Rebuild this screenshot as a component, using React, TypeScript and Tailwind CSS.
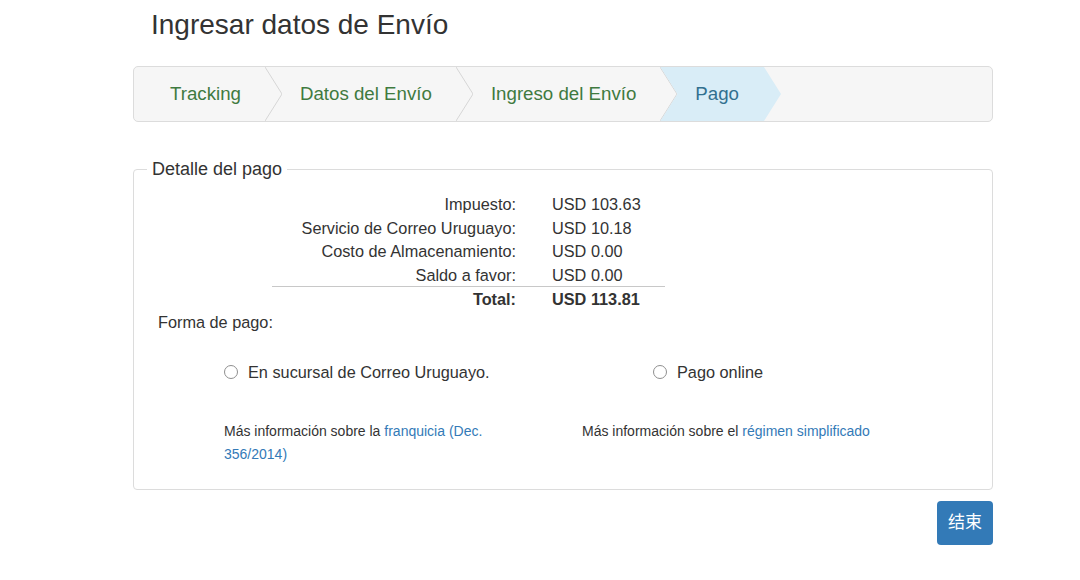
import React from 'react';

const steps = ['Tracking', 'Datos del Envío', 'Ingreso del Envío'];

const rows = [
  { label: 'Impuesto:', value: 'USD 103.63' },
  { label: 'Servicio de Correo Uruguayo:', value: 'USD 10.18' },
  { label: 'Costo de Almacenamiento:', value: 'USD 0.00' },
  { label: 'Saldo a favor:', value: 'USD 0.00' },
];

const Separator: React.FC = () => (
  <svg width="17" height="54" viewBox="0 0 17 54" className="shrink-0">
    <polyline points="0,0 17,27 0,54" fill="none" stroke="#d6d6d6" strokeWidth="1" />
  </svg>
);

const Radio: React.FC<{ label: string }> = ({ label }) => (
  <label className="flex items-center h-[22px] cursor-pointer">
    <span className="w-[14px] h-[14px] rounded-full border border-[#8f8f8f] bg-white shrink-0" />
    <span className="ml-[10px]">{label}</span>
  </label>
);

const App: React.FC = () => {
  return (
    <div className="min-h-[580px] bg-white text-[#333] font-['Liberation_Sans',Arial,sans-serif] text-[16.3px]">
      <div className="ml-[133px] w-[860px]">
        <h1 className="pt-[9px] pl-[18px] text-[28px] leading-[31px] font-normal">Ingresar datos de Envío</h1>

        {/* steps */}
        <nav className="mt-[26px] h-[56px] flex items-stretch bg-[#f6f6f6] border border-[#dcdcdc] rounded-[5px] text-[18.7px] overflow-hidden">
          {steps.map((step, i) => (
            <React.Fragment key={step}>
              <span className={`flex items-center text-[#3f7a3f] pr-[24px] ${i === 0 ? 'pl-[36px]' : 'pl-[18px]'}`}>
                {step}
              </span>
              <Separator />
            </React.Fragment>
          ))}
          <span className="-ml-[17px] flex items-center pl-[35px] pr-[42px] bg-[#d9edf7] text-[#31708f] [clip-path:polygon(0_0,calc(100%_-_17px)_0,100%_50%,calc(100%_-_17px)_100%,0_100%,17px_50%)]">
            Pago
          </span>
        </nav>

        <fieldset className="mt-[37px] border border-[#dcdcdc] rounded-[4px] pb-[23px]">
          <legend className="ml-[13px] px-[5px] text-[18px] leading-[20px]">Detalle del pago</legend>

          <div className="ml-[138px] mt-[13px] w-[393px]">
            {rows.map(r => (
              <div key={r.label} className="grid grid-cols-[244px_113px] gap-x-[36px] h-[23.5px] items-center">
                <span className="text-right whitespace-nowrap">{r.label}</span>
                <span>{r.value}</span>
              </div>
            ))}
            <div className="grid grid-cols-[244px_113px] gap-x-[36px] h-[24px] items-center border-t border-[#c8c8c8] font-bold">
              <span className="text-right">Total:</span>
              <span>USD 113.81</span>
            </div>
          </div>

          <div className="mt-[1px] ml-[24px] leading-[22px]">Forma de pago:</div>

          <div className="mt-[28px] flex">
            <div className="ml-[90px] w-[358px]">
              <Radio label="En sucursal de Correo Uruguayo." />
            </div>
            <div className="pl-[71px]">
              <Radio label="Pago online" />
            </div>
          </div>

          <div className="mt-[37px] flex text-[14px] leading-[23px]">
            <p className="ml-[90px] w-[300px]">
              Más información sobre la{' '}
              <a href="#" className="text-[#337ab7]">franquicia (Dec. 356/2014)</a>
            </p>
            <p className="ml-[58px]">
              Más información sobre el{' '}
              <a href="#" className="text-[#337ab7]">régimen simplificado</a>
            </p>
          </div>
        </fieldset>

        <div className="mt-[11px] flex justify-end">
          <button className="w-[56px] h-[44px] rounded-[4px] bg-[#337ab7] text-white text-[17px] font-['Liberation_Sans','Noto_Sans_CJK_SC',sans-serif]">
            结束
          </button>
        </div>
      </div>
    </div>
  );
};

export default App;
